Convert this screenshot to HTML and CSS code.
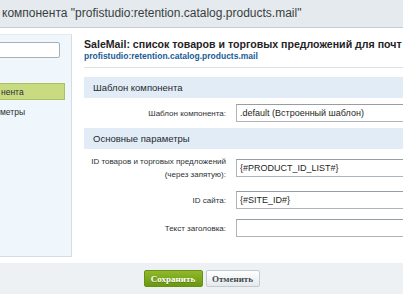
FILE: index.html
```html
<!DOCTYPE html>
<html lang="ru">
<head>
<meta charset="utf-8">
<link rel="stylesheet" href="styles.css">
</head>
<body>
<div class="header">компонента "profistudio:retention.catalog.products.mail"</div>
<div class="main">
  <div class="sidebar">
    <div class="search"></div>
    <div class="nav-item active">нента</div>
    <div class="nav-item">метры</div>
  </div>
  <div class="content">
    <div class="title">SaleMail: список товаров и торговых предложений для почт</div>
    <div class="code">profistudio:retention.catalog.products.mail</div>
    <div class="sep"></div>
    <div class="section">Шаблон компонента</div>
    <div class="row">
      <div class="label">Шаблон компонента:</div>
      <div class="field"><div class="input">.default (Встроенный шаблон)</div></div>
    </div>
    <div class="section">Основные параметры</div>
    <div class="row">
      <div class="label">ID товаров и торговых предложений<br>(через запятую):</div>
      <div class="field"><div class="input">{#PRODUCT_ID_LIST#}</div></div>
    </div>
    <div class="row">
      <div class="label">ID сайта:</div>
      <div class="field"><div class="input">{#SITE_ID#}</div></div>
    </div>
    <div class="row">
      <div class="label">Текст заголовка:</div>
      <div class="field"><div class="input"></div></div>
    </div>
  </div>
</div>
<div class="footer">
  <button class="btn btn-save">Сохранить</button>
  <button class="btn btn-cancel">Отменить</button>
</div>
</body>
</html>
```
FILE: styles.css
```css
* { box-sizing: border-box; }
html, body { margin: 0; padding: 0; }
body {
  width: 403px;
  height: 294px;
  overflow: hidden;
  background: #ffffff;
  font-family: "Liberation Sans", Arial, sans-serif;
  color: #2b2f33;
}
.header {
  height: 28px;
  background: #e4eaed;
  border-bottom: 1px solid #c6ced2;
  font-size: 12px;
  line-height: 26px;
  padding-left: 2px;
  color: #3a3e42;
  white-space: nowrap;
}
.main {
  display: flex;
  height: 235px;
}
.sidebar {
  flex: none;
  width: 72px;
  margin-top: 6px;
  height: 223px;
  background: #eff6fc;
  border-right: 1px solid #d3dde5;
  border-bottom: 1px solid #d3dde5;
  border-top: 1px solid #e3eaf0;
  padding-top: 7px;
  font-size: 8.5px;
}
.search {
  width: 65px;
  height: 16px;
  margin-left: -5px;
  background: #fff;
  border: 1px solid #a9b0b5;
  border-radius: 2px;
}
.nav-item {
  height: 17px;
  line-height: 16px;
  white-space: nowrap;
  color: #2a2e32;
}
.nav-item.active {
  margin-top: 25px;
  width: 70px;
  margin-left: -5px;
  padding-left: 5px;
  background: #c8db80;
  border: 1px solid #abc062;
}
.nav-item + .nav-item { margin-top: 4px; }
.content {
  flex: 1;
  min-width: 0;
  margin-left: 12px;
  padding-top: 10px;
  overflow: hidden;
}
.title {
  font-size: 10.6px;
  font-weight: bold;
  white-space: nowrap;
  line-height: 12px;
  color: #1f2326;
}
.code {
  font-size: 8.5px;
  font-weight: bold;
  color: #1a5b96;
  line-height: 11px;
  margin-top: 1px;
}
.sep {
  height: 1px;
  background: #dfe3e6;
  margin-top: 5px;
}
.section {
  height: 21px;
  margin-top: 9px;
  background: #e2ecf6;
  font-size: 9.5px;
  line-height: 21px;
  padding-left: 9px;
  color: #262a2e;
}
.row {
  display: grid;
  grid-template-columns: 142px 1fr;
  column-gap: 10px;
  align-items: center;
}
.section + .row { margin-top: 6px; }
.row + .section { margin-top: 6px; }
.row + .row { margin-top: 10px; }
.label {
  text-align: right;
  font-size: 8px;
  line-height: 13px;
  color: #2d3135;
  white-space: nowrap;
}
.input {
  height: 18px;
  width: 180px;
  border: 1px solid #aeb4b8;
  border-top-color: #979ea3;
  background: #fff;
  font-size: 9px;
  line-height: 16px;
  padding-left: 3px;
  color: #1c1f22;
  white-space: nowrap;
}
.footer {
  height: 31px;
  background: #edf1f3;
  display: flex;
  justify-content: center;
  align-items: center;
  gap: 3px;
}
.btn {
  height: 17px;
  font-family: "Liberation Serif", "Times New Roman", serif;
  font-weight: bold;
  font-size: 9px;
  border-radius: 2px;
  padding: 0;
  cursor: pointer;
}
.btn-save {
  width: 59px;
  color: #fff;
  background: linear-gradient(#8fb92a, #6a9812);
  border: 1px solid #6b9016;
  text-shadow: 0 1px 0 rgba(0,0,0,0.25);
}
.btn-cancel {
  width: 54px;
  color: #3d4a52;
  background: linear-gradient(#ffffff, #e5e9ec);
  border: 1px solid #c4cbd0;
}
```
